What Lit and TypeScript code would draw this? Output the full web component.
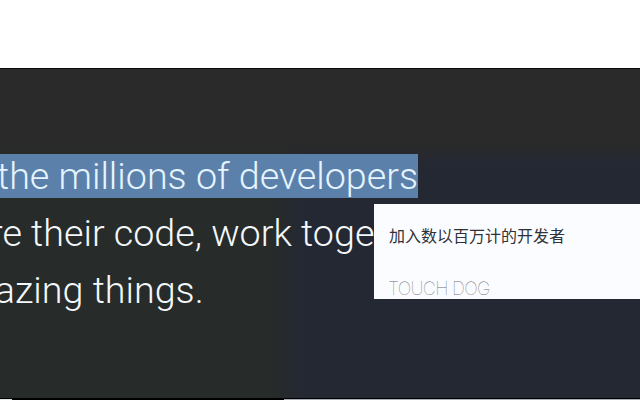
import { LitElement, html, css } from "lit";
import { customElement } from "lit/decorators.js";

@customElement("app-root")
export class AppRoot extends LitElement {
  static styles = css`
    :host { display: block; width: 640px; height: 400px; overflow: hidden; background: #fff; position: relative; }
    .top { height: 68px; background: #fff; }
    .hero { height: 330px; border-top: 1px solid #0c0c0c; box-sizing: border-box;
      background:
        linear-gradient(180deg, #2a2a2a 0, #2a2a2a 74px, rgba(42,42,42,0) 96px),
        linear-gradient(90deg, #272b2a 0, #272b2a 272px, #242833 305px, #242833 100%);
      padding-top: 79px; font: 300 37.7px/57px Roboto, sans-serif; color: #f4f8fb; white-space: nowrap; }
    .line { display: block; }
    .l1 { margin-left: -3px; }
    .l1 span { background: #5b81ab; color: #e6f4ff; }
    .l2 { margin-left: -112px; }
    .l3 { margin-left: -147.5px; }
    .rule { height: 1px; background: #000; }
    .edge { height: 1px; display: flex; background: #000; }
    .edge-left { width: 12px; background: #dfe6e4; }
    .edge-right { margin-left: 272px; flex: 1; background: #a9aeb9; }
    .card { position: absolute; left: 374px; top: 204px; width: 266px; height: 95px; background: #fbfcff; overflow: hidden;
      box-sizing: border-box; padding: 21px 0 0 15px; }
    .zh { font: 400 16px/20px "Noto Sans CJK SC", sans-serif; color: #2f3238; }
    .brand { margin-top: 34px; margin-left: -1px; font: 100 18px/20px Inter, sans-serif; letter-spacing: -0.7px; color: #6f6f6f; }
  `;
  render() {
    return html`
      <div class="top"></div>
      <div class="hero">
        <div class="line l1"><span>the millions of developers</span></div>
        <div class="line l2">to share their code, work together</div>
        <div class="line l3">build amazing things.</div>
      </div>
      <div class="rule"></div>
      <div class="edge"><div class="edge-left"></div><div class="edge-right"></div></div>
      <div class="card">
        <div class="zh">加入数以百万计的开发者</div>
        <div class="brand">TOUCH DOG</div>
      </div>
    `;
  }
}
